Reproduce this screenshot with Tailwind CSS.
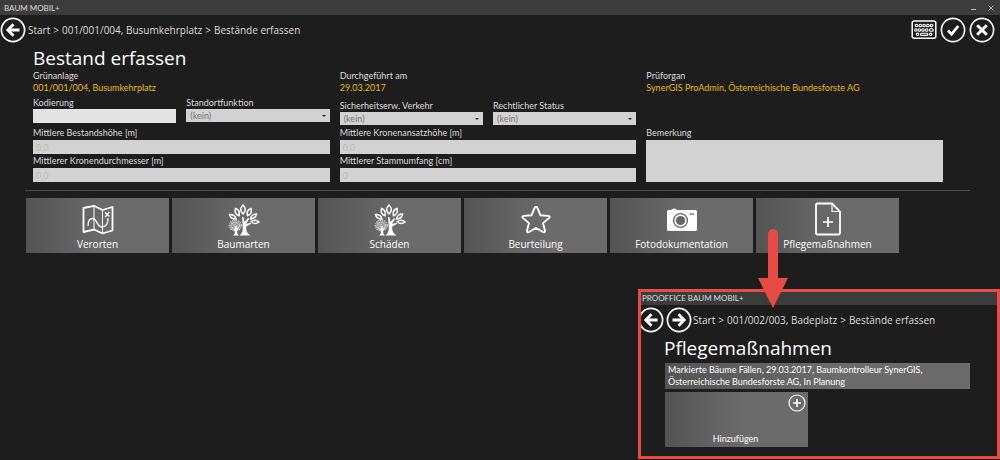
<!DOCTYPE html>
<html lang="de">
<head>
<meta charset="utf-8">
<meta name="viewport" content="width=device-width, initial-scale=1">
<title>BAUM MOBIL+</title>
<script src="https://cdn.jsdelivr.net/npm/@tailwindcss/browser@4"></script>
</head>
<body class="relative min-h-screen bg-[#1d1d1d] font-['Lato','Noto_Sans',sans-serif] text-[9px] leading-3 text-[#dcdcdc]">

<!-- Shared icon shapes -->
<svg class="hidden" aria-hidden="true">
  <symbol id="arrow-left" viewBox="0 0 26 26"><circle cx="13" cy="13" r="11.6" fill="none" stroke="#fff" stroke-width="1.7"/><path d="M19.5 13H8.5M13.500 7.300 7.800 13l5.700 5.700" fill="none" stroke="#fff" stroke-width="2.8"/></symbol>
  <symbol id="tree" viewBox="0 0 32 32">
    <g fill="none" stroke="#fff" stroke-width="1.5">
      <path d="M15 1c3 3 3 6 0 9-3-3-3-6 0-9z"/>
      <path d="M7.500 4.500c3.600 1.300 4.500 4 3.500 7.300-3.500-1.300-4.500-4-3.500-7.300z"/>
      <path d="M23 4.500c1 3.300-.2 6-3.500 7.300-1-3.400 0-6 3.500-7.300z"/>
      <path d="M1.500 10.500c3.500-.3 5.600 1.300 6.500 4.500-3.500.3-5.700-1.300-6.500-4.500z"/>
      <path d="M28.500 10c-.6 3.300-2.600 5-6 5 .6-3.400 2.600-5 6-5z"/>
      <path d="M31 18c-2.700 2.200-5.400 2-7.800-.3 2.600-2 5.400-2 7.800.3z"/>
    </g>
    <path d="M14 13h1.500l1 5 3.500-4 1.200.8-3 5.200 4.500-1.200.4 1-5 3c0 4 .7 6.200 4.500 8.700H11.500c2.800-2 3.500-5 3.300-9z" fill="#fff"/>
    <path d="M3 18l3-2 3 .5 3 2 1.500 3-.5 3-3 2H4.500L2 24.500l-.8-3z" fill="#9a9a9a"/>
    <g fill="none" stroke="#dedede" stroke-width="1.200" stroke-dasharray="1.300 1 .7 1.200">
      <ellipse cx="7.300" cy="21.500" rx="6.200" ry="5.300"/><ellipse cx="7.300" cy="21.500" rx="4" ry="3.300"/><circle cx="7.300" cy="21.500" r="1.500"/>
    </g>
    <path d="M7 22h1.500l.4 3 2.600-2.500-2.400 4.500c0 2 .5 3.500 2 4.500H5c1.500-1 2-2.500 1.800-4.500L4 23.500l2.800 2z" fill="#fff"/>
  </symbol>
</svg>

<header class="flex h-[15px] items-center justify-between bg-[#3c3c3c] pr-[6px] pl-1">
  <span class="text-[8px]">BAUM MOBIL+</span>
  <div class="flex items-center gap-3">
    <button aria-label="Minimieren" class="flex size-[5px] items-end"><span class="h-px w-full bg-[#bbb]"></span></button>
    <button aria-label="Schließen"><svg class="size-[6px]" viewBox="0 0 6 6"><path d="M.5.500l5 5M5.500.500l-5 5" stroke="#aaa" stroke-width="1"/></svg></button>
  </div>
</header>

<div class="flex h-[29px] items-center justify-between pr-[5px]">
  <div class="flex items-center gap-[2px]">
    <button aria-label="Zurück"><svg class="size-[26px]"><use href="#arrow-left"/></svg></button>
    <nav aria-label="Pfad" class="flex gap-[3px] font-['Open_Sans','Noto_Sans',sans-serif] text-[10px] leading-4"><a href="#">Start</a><span>&gt;</span><a href="#">001/001/004, Busumkehrplatz</a><span>&gt;</span><a href="#">Bestände erfassen</a></nav>
  </div>
  <div class="flex items-center gap-[3px]">
    <button aria-label="Tastatur"><svg class="h-[26px] w-[26px]" viewBox="0 0 26 26" fill="none" stroke="#fff"><rect x="1.200" y="4" width="23.600" height="17.200" rx="2" stroke-width="1.500"/><g stroke-width="1.100"><circle cx="5.500" cy="8.500" r="1.300"/><circle cx="9.300" cy="8.500" r="1.300"/><circle cx="13.100" cy="8.500" r="1.300"/><circle cx="16.900" cy="8.500" r="1.300"/><circle cx="20.600" cy="8.500" r="1.300"/><circle cx="4.800" cy="13" r="1.200"/><circle cx="8.300" cy="13" r="1.300"/><circle cx="12" cy="13" r="1.300"/><circle cx="15.700" cy="13" r="1.300"/><rect x="18.500" y="11.700" width="3.700" height="2.600" rx="1"/><circle cx="6.500" cy="17.300" r="1.200"/><rect x="9.500" y="16.200" width="7.400" height="2.200" rx="1"/><circle cx="19.700" cy="17.300" r="1.200"/></g></svg></button>
    <button aria-label="Bestätigen"><svg class="size-[26px]" viewBox="0 0 26 26" fill="none" stroke="#fff"><circle cx="13" cy="13" r="11.600" stroke-width="1.600"/><path d="M8 13.500l3.600 3.700L18.200 9" stroke-width="2.700"/></svg></button>
    <button aria-label="Abbrechen"><svg class="size-[26px]" viewBox="0 0 26 26" fill="none" stroke="#fff"><circle cx="13" cy="13" r="11.600" stroke-width="1.600"/><path d="M8.200 8.200l9.600 9.600M17.800 8.200l-9.600 9.600" stroke-width="3"/></svg></button>
  </div>
</div>

<main>
  <form class="pr-[57px] pl-[33px]">
    <h1 class="h-[26px] font-['Open_Sans','Noto_Sans',sans-serif] text-[19px] leading-7 text-white">Bestand erfassen</h1>
    <dl class="grid grid-cols-3 gap-[10px]">
      <div><dt>Grünanlage</dt><dd class="text-[#e6bc08]">001/001/004, Busumkehrplatz</dd></div>
      <div><dt>Durchgeführt am</dt><dd class="text-[#e6bc08]">29.03.2017</dd></div>
      <div><dt>Prüforgan</dt><dd class="text-[#e6bc08]">SynerGIS ProAdmin, Österreichische Bundesforste AG</dd></div>
    </dl>

    <div class="grid grid-cols-3 gap-x-[10px] pt-[3px]">
      <div class="flex flex-col gap-[2px]">
        <div class="grid h-[28px] grid-cols-2 items-start gap-[10px]">
          <div class="flex flex-col"><label for="kod">Kodierung</label><input id="kod" class="h-[14px] w-full bg-[#e3e3e3] px-1 text-[#333]"></div>
          <div class="flex flex-col"><label for="ort">Standortfunktion</label>
            <div class="grid items-center"><select id="ort" class="col-start-1 row-start-1 h-[13px] w-full appearance-none bg-[#d2d2d2] px-1 leading-3 text-[#777]"><option>(kein)</option></select><svg class="pointer-events-none col-start-1 row-start-1 mr-1 h-[2px] w-[4px] justify-self-end" viewBox="0 0 4 2"><path d="M0 0h4L2 2z" fill="#222"/></svg></div></div>
        </div>
        <div class="flex flex-col gap-px"><label for="hoehe">Mittlere Bestandshöhe [m]</label><input id="hoehe" value="0,0" class="h-[14px] w-full bg-[#d2d2d2] px-[3px] text-[#bbb]"></div>
        <div class="-mt-px flex flex-col gap-px"><label for="krone">Mittlerer Kronendurchmesser [m]</label><input id="krone" value="0,0" class="h-[14px] w-full bg-[#d2d2d2] px-[3px] text-[#bbb]"></div>
      </div>
      <div class="flex flex-col gap-[2px]">
        <div class="grid h-[28px] grid-cols-2 items-end gap-[10px]">
          <div class="flex flex-col"><label for="verk">Sicherheitserw. Verkehr</label>
            <div class="grid items-center"><select id="verk" class="col-start-1 row-start-1 h-[13px] w-full appearance-none bg-[#d2d2d2] px-1 leading-3 text-[#777]"><option>(kein)</option></select><svg class="pointer-events-none col-start-1 row-start-1 mr-1 h-[2px] w-[4px] justify-self-end" viewBox="0 0 4 2"><path d="M0 0h4L2 2z" fill="#222"/></svg></div></div>
          <div class="flex flex-col"><label for="status">Rechtlicher Status</label>
            <div class="grid items-center"><select id="status" class="col-start-1 row-start-1 h-[13px] w-full appearance-none bg-[#d2d2d2] px-1 leading-3 text-[#777]"><option>(kein)</option></select><svg class="pointer-events-none col-start-1 row-start-1 mr-1 h-[2px] w-[4px] justify-self-end" viewBox="0 0 4 2"><path d="M0 0h4L2 2z" fill="#222"/></svg></div></div>
        </div>
        <div class="flex flex-col gap-px"><label for="ansatz">Mittlere Kronenansatzhöhe [m]</label><input id="ansatz" value="0,0" class="h-[14px] w-full bg-[#d2d2d2] px-[3px] text-[#bbb]"></div>
        <div class="-mt-px flex flex-col gap-px"><label for="stamm">Mittlerer Stammumfang [cm]</label><input id="stamm" value="0" class="h-[14px] w-full bg-[#d2d2d2] px-[3px] text-[#bbb]"></div>
      </div>
      <div class="flex flex-col gap-px pt-[30px]"><label for="bem">Bemerkung</label><textarea id="bem" class="w-full grow resize-none bg-[#d2d2d2] p-1 text-[#333]"></textarea></div>
    </div>
  </form>

  <hr class="mt-2 mr-[30px] ml-[25px] border-[#4a4a4a]">

  <div class="mt-[7px] mr-[101px] ml-[26px] grid grid-cols-6 gap-[3px] font-['Open_Sans','Noto_Sans',sans-serif] text-[10px] leading-4 text-white">
    <button class="flex h-[55px] flex-col items-center justify-between bg-linear-to-r from-[#545454] to-[#6b6b6b] to-55% pt-[6px] pb-px">
      <svg class="h-8 w-8" viewBox="0 0 32 32" fill="none" stroke="#fff" stroke-linejoin="round"><path d="M1.500 4 12 1.800 20.500 6 30.500 3v23.500L20.500 29.500 12 25.500 1.500 28z" stroke-width="1.800"/><path d="M12 2v23.500M20.500 6v23.500" stroke-width="1"/><path d="M6 22c0-5 2-7.500 4.500-7.500 4.500 0 4.500 8.500 9.500 8.500 4 0 6-4 6-9" stroke-width="1.300"/><path d="M23 8.500l4.500 4M27.300 7.800 23.300 13" stroke-width="1.300"/></svg>Verorten</button>
    <button class="flex h-[55px] flex-col items-center justify-between bg-linear-to-r from-[#545454] to-[#6b6b6b] to-55% pt-[6px] pb-px"><svg class="h-8 w-8"><use href="#tree"/></svg>Baumarten</button>
    <button class="flex h-[55px] flex-col items-center justify-between bg-linear-to-r from-[#545454] to-[#6b6b6b] to-55% pt-[6px] pb-px"><svg class="h-8 w-8"><use href="#tree"/></svg>Schäden</button>
    <button class="flex h-[55px] flex-col items-center justify-between bg-linear-to-r from-[#545454] to-[#6b6b6b] to-55% pt-[6px] pb-px">
      <svg class="h-8 w-8" viewBox="0 0 32 32"><path d="M16 2.800q1 0 1.600 1.500l2.900 7 7.700.6q2.500.3.700 2.200l-5.900 5 1.900 7.500q.4 2.600-1.900 1.400l-7-4-7 4q-2.300 1.200-1.900-1.400l1.900-7.500-5.900-5q-1.800-1.900.7-2.200l7.700-.6 2.900-7Q15 2.800 16 2.800z" fill="none" stroke="#fff" stroke-width="1.900" stroke-linejoin="round"/></svg>Beurteilung</button>
    <button class="flex h-[55px] flex-col items-center justify-between bg-linear-to-r from-[#545454] to-[#6b6b6b] to-55% pt-[6px] pb-px">
      <svg class="h-8 w-8" viewBox="0 0 32 32"><path d="M2.500 6H5q1-1.500 3-1.500T11 6h18.500q1.500 0 1.500 1.500v18q0 1.500-1.500 1.500h-27Q1 27 1 25.500v-18Q1 6 2.500 6z" fill="#fff"/><circle cx="14.500" cy="16.500" r="6.900" fill="none" stroke="#666" stroke-width="1.400"/><circle cx="14.500" cy="16.500" r="4.600" fill="#666"/><path d="M23.500 10h4.500" stroke="#666" stroke-width="1.300"/></svg>Fotodokumentation</button>
    <button class="flex h-[55px] flex-col items-center justify-between bg-linear-to-r from-[#545454] to-[#6b6b6b] to-55% pt-1 pb-px">
      <svg class="h-[34px] w-8" viewBox="0 0 32 34" fill="none" stroke="#fff"><path d="M5.500 1.500H20l8 8V31q0 1.500-1.500 1.500h-21Q4 32.500 4 31V3q0-1.500 1.500-1.500z" stroke-width="1.800"/><path d="M20 1.500v8h8" stroke-width="1.200"/><path d="M16 15v10M11 20h10" stroke-width="1.700"/></svg>Pflegemaßnahmen</button>
  </div>
</main>

<!-- Inset window -->
<section class="absolute right-0 bottom-px w-[362px] border-[3px] border-[#e84a44] bg-[#1d1d1d] pb-[9px]">
  <header class="h-[13px] bg-[#3c3c3c] pl-px text-[8px]">PROOFFICE BAUM MOBIL+</header>
  <div class="flex h-[29px] items-center gap-px overflow-hidden">
    <div class="-ml-[3px] flex gap-[2px]">
      <button aria-label="Zurück"><svg class="size-[26px]"><use href="#arrow-left"/></svg></button>
      <button aria-label="Vor"><svg class="size-[26px] rotate-180"><use href="#arrow-left"/></svg></button>
    </div>
    <nav aria-label="Pfad" class="flex gap-[3px] font-['Open_Sans','Noto_Sans',sans-serif] text-[10px] leading-4"><a href="#">Start</a><span>&gt;</span><a href="#">001/002/003, Badeplatz</a><span>&gt;</span><a href="#">Bestände erfassen</a></nav>
  </div>
  <div class="pr-[27px] pl-6">
    <h2 class="-ml-px h-[29px] font-['Open_Sans','Noto_Sans',sans-serif] text-[19px] leading-7 text-white">Pflegemaßnahmen</h2>
    <p class="bg-linear-to-r from-[#545454] to-[#6b6b6b] to-55% px-[3px] py-px text-white">Markierte Bäume Fällen, 29.03.2017, Baumkontrolleur SynerGIS,<br>Österreichische Bundesforste AG, In Planung</p>
    <button class="mt-[3px] flex h-[55px] w-[143px] flex-col items-center justify-between bg-linear-to-r from-[#545454] to-[#6b6b6b] to-55% pt-[2px] pr-[2px] pb-[2px] text-white">
      <svg class="size-[18px] self-end" viewBox="0 0 18 18" fill="none" stroke="#fff"><circle cx="9" cy="9" r="8" stroke-width="1.200"/><path d="M9 5v8M5 9h8" stroke-width="1.600"/></svg>Hinzufügen</button>
  </div>
</section>

<!-- Callout arrow pointing to the inset window -->
<svg class="absolute right-[212px] bottom-[152px] h-[79px] w-[30px]" viewBox="0 0 30 79" aria-hidden="true"><path d="M10 5a5 5 0 0 1 10 0v44h10L15 79 0 49h10z" fill="#e84a44"/></svg>
</body>
</html>
